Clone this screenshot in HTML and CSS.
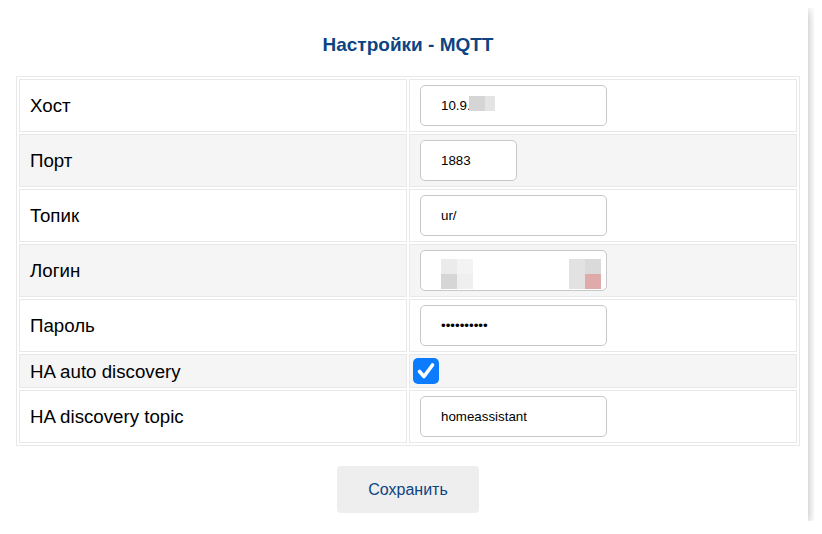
FILE: index.html
```html
<!DOCTYPE html>
<html lang="ru">
<head>
<meta charset="utf-8">
<title>Настройки - MQTT</title>
<link rel="stylesheet" href="styles.css">
</head>
<body>
<div class="card">
  <h3 class="title">Настройки - MQTT</h3>
  <table class="settings">
    <tr>
      <td class="label">Хост</td>
      <td class="value">
        <span class="field-wrap">
          <input class="field" type="text" value="10.9.">
          <span class="redact r-host"><i class="c1"></i><i class="c2"></i></span>
        </span>
      </td>
    </tr>
    <tr class="alt">
      <td class="label">Порт</td>
      <td class="value"><input class="field field-short" type="text" value="1883"></td>
    </tr>
    <tr>
      <td class="label">Топик</td>
      <td class="value"><input class="field" type="text" value="ur/"></td>
    </tr>
    <tr class="alt">
      <td class="label">Логин</td>
      <td class="value">
        <span class="field-wrap">
          <input class="field" type="text" value="">
          <span class="redact r-login-a"><i class="a1"></i><i class="a2"></i><i class="a3"></i><i class="a4"></i></span>
          <span class="redact r-login-b"><i class="b1"></i><i class="b2"></i><i class="b3"></i><i class="b4"></i></span>
        </span>
      </td>
    </tr>
    <tr>
      <td class="label">Пароль</td>
      <td class="value"><input class="field" type="password" value="1234567890"></td>
    </tr>
    <tr class="alt">
      <td class="label">HA auto discovery</td>
      <td class="value value-check">
        <span class="checkbox" role="checkbox" aria-checked="true">
          <svg width="26" height="26" viewBox="0 0 26 26"><polyline points="6.5,13.5 11,18.5 19.5,7" fill="none" stroke="#fff" stroke-width="3.6" stroke-linecap="round" stroke-linejoin="round"/></svg>
        </span>
      </td>
    </tr>
    <tr>
      <td class="label">HA discovery topic</td>
      <td class="value"><input class="field" type="text" value="homeassistant"></td>
    </tr>
  </table>
  <div class="actions">
    <button class="save" type="button">Сохранить</button>
  </div>
</div>
</body>
</html>
```

FILE: styles.css
```css
html, body {
  background: #ffffff;
}
body {
  margin: 8px;
  font-family: "Liberation Sans", Arial, sans-serif;
  color: #000;
}
.card {
  width: 800px;
  box-sizing: border-box;
  padding: 8px;
  background: #fff;
  box-shadow: 0 2px 10px rgba(0, 0, 0, 0.3);
}
.title {
  margin: 18px 0 21px;
  text-align: center;
  font-size: 19px;
  line-height: 21px;
  font-weight: bold;
  color: #0c4482;
}
.settings {
  width: 100%;
  border-collapse: separate;
  border-spacing: 2px;
  border: 1px solid #e8e8e8;
}
.settings td {
  width: 50%;
  border: 1px solid #e8e8e8;
  padding: 5px 10px;
  vertical-align: middle;
}
.settings tr.alt td {
  background: #f5f5f5;
}
.label {
  font-size: 18.7px;
  line-height: 21px;
}
.settings td.value-check {
  padding: 3px;
}
.field-wrap {
  position: relative;
  display: inline-block;
  vertical-align: middle;
}
.field {
  display: block;
  box-sizing: border-box;
  width: 187px;
  height: 41px;
  padding: 0 20px;
  border: 1px solid #c8c8c8;
  border-radius: 5px;
  background: #fff;
  font-family: "Liberation Sans", Arial, sans-serif;
  font-size: 13.33px;
  color: #000;
  outline: none;
}
.field-short {
  width: 97px;
}
.redact {
  position: absolute;
  display: grid;
  grid-template-columns: 16px 16px;
}
.redact i {
  display: block;
}
.r-host {
  left: 49px;
  top: 11px;
  grid-template-columns: 16px 10px;
}
.r-host i {
  height: 15px;
}
.r-host .c1 { background: #d5d5d5; }
.r-host .c2 { background: #e4e4e4; }
.r-login-a {
  left: 21px;
  top: 9px;
}
.r-login-b {
  left: 149px;
  top: 9px;
}
.r-login-a i, .r-login-b i {
  height: 15px;
}
.a1 { background: #ebebeb; }
.a2 { background: #f3f3f3; }
.a3 { background: #d6d6d6; }
.a4 { background: #efefef; }
.b1 { background: #e2e2e2; }
.b2 { background: #dadada; }
.b3 { background: #e2e2e2; }
.b4 { background: #e0aaaa; }
.checkbox {
  display: block;
  width: 26px;
  height: 26px;
  border-radius: 5px;
  background: #0b7bff;
}
.checkbox svg {
  display: block;
}
.actions {
  display: flex;
  justify-content: center;
  margin-top: 20px;
}
.save {
  width: 142px;
  height: 47px;
  border: none;
  border-radius: 4px;
  background: #eeeeee;
  font-family: "Liberation Sans", Arial, sans-serif;
  font-size: 16px;
  color: #0c4482;
}
```
